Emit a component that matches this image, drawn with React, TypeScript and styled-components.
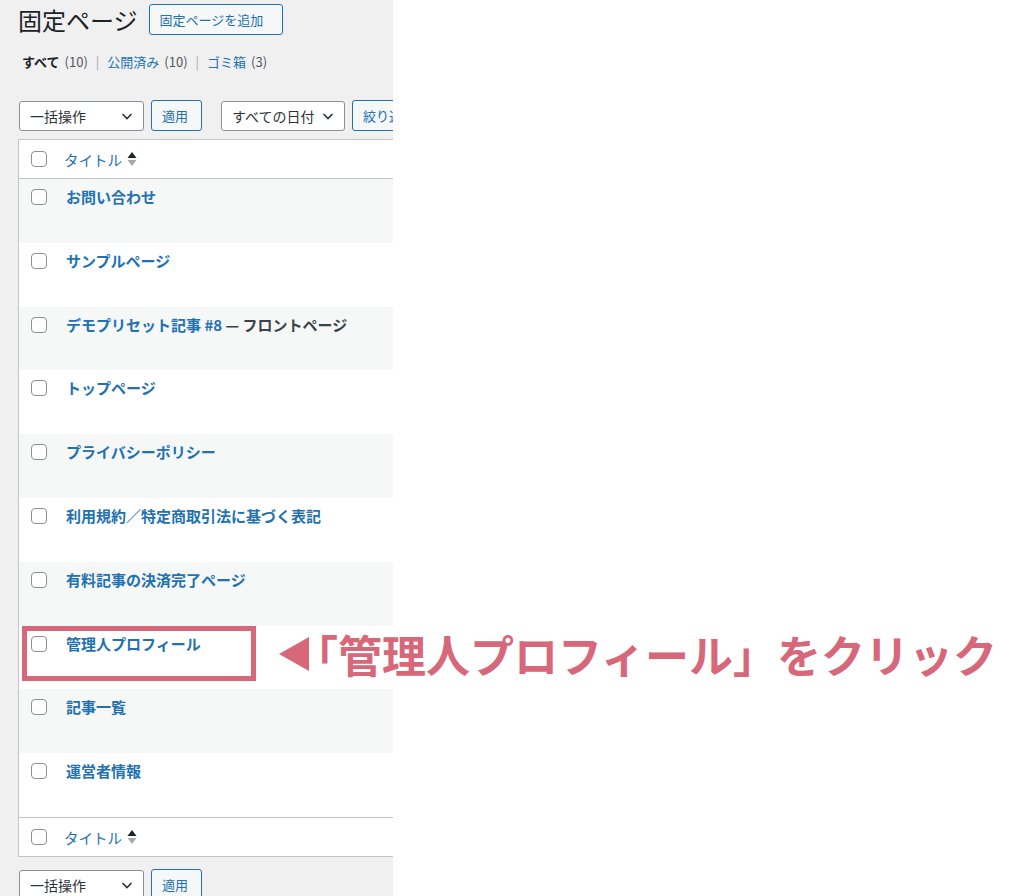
import React from "react";
import styled, { createGlobalStyle } from "styled-components";

const GlobalStyle = createGlobalStyle`
  body {
    margin: 0;
    background: #ffffff;
    font-family: "Noto Sans CJK JP", "Noto Sans", "Liberation Sans", sans-serif;
    color: #3c434a;
  }
`;

const Page = styled.div`
  position: relative;
  display: flex;
  width: 1024px;
  height: 896px;
  overflow: hidden;
`;

// 管理画面の左側（グレー部分）
const Admin = styled.div`
  width: 375px;
  height: 896px;
  padding: 4px 0 0 18px;
  background: #f0f0f1;
  overflow: hidden;
  display: flex;
  flex-direction: column;
`;

const HeadRow = styled.div`
  display: flex;
  align-items: center;
  gap: 11px;
  height: 31px;
`;

const Heading = styled.h1`
  margin: 0;
  font-size: 24px;
  font-weight: 400;
  line-height: 31px;
  color: #1d2327;
  white-space: nowrap;
`;

const OutlineButton = styled.button<{ $width?: number }>`
  flex: none;
  height: 31px;
  ${(p) => (p.$width ? `width: ${p.$width}px;` : "")}
  padding: 0 10px;
  border: 1px solid #2271b1;
  border-radius: 3px;
  background: #f6f7f7;
  color: #2271b1;
  font-family: inherit;
  font-size: 13px;
  white-space: nowrap;
  overflow: hidden;
  text-align: left;
`;

const Filters = styled.div`
  display: flex;
  align-items: center;
  margin-top: 17px;
  padding-left: 4px;
  height: 20px;
  font-size: 13px;
  white-space: nowrap;
`;

const FilterItem = styled.span<{ $current?: boolean }>`
  color: ${(p) => (p.$current ? "#1d2327" : "#2271b1")};
  font-weight: ${(p) => (p.$current ? 700 : 400)};
`;

const Count = styled.span`
  color: #50575e;
  margin-left: 5px;
`;

const Sep = styled.span`
  color: #a7aaad;
  margin: 0 8px;
`;

const Toolbar = styled.div<{ $top: number }>`
  display: flex;
  align-items: center;
  gap: 7px;
  margin-top: ${(p) => p.$top}px;
  padding-left: 1px;
  flex: none;
`;

const Select = styled.div<{ $width: number; $gapLeft?: number }>`
  flex: none;
  box-sizing: border-box;
  width: ${(p) => p.$width}px;
  height: 30px;
  display: flex;
  align-items: center;
  justify-content: space-between;
  padding: 0 8px 0 10px;
  margin-left: ${(p) => p.$gapLeft ?? 0}px;
  border: 1px solid #8c8f94;
  border-radius: 3px;
  background: #ffffff;
  color: #2c3338;
  font-size: 14px;
  white-space: nowrap;
`;

const Table = styled.div`
  flex: none;
  width: 1000px;
  margin-top: 8px;
  border: 1px solid #c3c4c7;
  background: #ffffff;
`;

const HeadCell = styled.div<{ $bottom?: boolean }>`
  display: flex;
  align-items: center;
  height: 38px;
  padding-left: 12px;
  ${(p) =>
    p.$bottom ? "border-top: 1px solid #c3c4c7;" : "border-bottom: 1px solid #c3c4c7;"}
`;

const HeadLabel = styled.span`
  margin-left: 17px;
  color: #2271b1;
  font-size: 14.5px;
  display: flex;
  align-items: center;
  gap: 5px;
`;

const Row = styled.div<{ $alt: boolean }>`
  display: flex;
  align-items: flex-start;
  box-sizing: border-box;
  height: 63.8px;
  padding: 10px 0 0 12px;
  background: ${(p) => (p.$alt ? "#f6f7f7" : "#ffffff")};
`;

const Check = styled.span`
  flex: none;
  box-sizing: border-box;
  width: 16px;
  height: 16px;
  border: 1px solid #8c8f94;
  border-radius: 4px;
  background: #ffffff;
`;

const RowTitle = styled.span`
  margin: -2px 0 0 19px;
  font-size: 15px;
  font-weight: 700;
  line-height: 20px;
  color: #2271b1;
  white-space: nowrap;
`;

const PostState = styled.span`
  color: #3c434a;
`;

// 注釈（赤枠・矢印・説明文）
const Highlight = styled.div`
  position: absolute;
  left: 22px;
  top: 626px;
  width: 234px;
  height: 55px;
  box-sizing: border-box;
  border: 5px solid #d6687a;
`;

const Callout = styled.div`
  position: absolute;
  left: 277px;
  top: 624px;
  display: flex;
  align-items: center;
  color: #d6687a;
  font-size: 44px;
  font-weight: 700;
  line-height: 60px;
  white-space: nowrap;
`;

const CalloutText = styled.span`
  margin-left: -17px;
`;

const Chevron = () => (
  <svg width="16" height="16" viewBox="0 0 16 16" fill="none">
    <path d="M3.5 6l4.5 4.5L12.5 6" stroke="#2c3338" strokeWidth="1.6" />
  </svg>
);

const SortIcon = () => (
  <svg width="10" height="16" viewBox="0 0 10 16">
    <polygon points="5,1 9.5,7 0.5,7" fill="#1d2327" />
    <polygon points="0.5,9 9.5,9 5,15" fill="#a7aaad" />
  </svg>
);

const pages = [
  "お問い合わせ",
  "サンプルページ",
  "デモプリセット記事 #8",
  "トップページ",
  "プライバシーポリシー",
  "利用規約／特定商取引法に基づく表記",
  "有料記事の決済完了ページ",
  "管理人プロフィール",
  "記事一覧",
  "運営者情報",
];

export default function App() {
  return (
    <>
      <GlobalStyle />
      <Page>
        <Admin>
          <HeadRow>
            <Heading>固定ページ</Heading>
            <OutlineButton $width={134}>固定ページを追加</OutlineButton>
          </HeadRow>

          <Filters>
            <FilterItem $current>すべて</FilterItem>
            <Count>(10)</Count>
            <Sep>|</Sep>
            <FilterItem>公開済み</FilterItem>
            <Count>(10)</Count>
            <Sep>|</Sep>
            <FilterItem>ゴミ箱</FilterItem>
            <Count>(3)</Count>
          </Filters>

          <Toolbar $top={29}>
            <Select $width={125}>
              一括操作
              <Chevron />
            </Select>
            <OutlineButton $width={51}>適用</OutlineButton>
            <Select $width={124} $gapLeft={12}>
              すべての日付
              <Chevron />
            </Select>
            <OutlineButton>絞り込み</OutlineButton>
          </Toolbar>

          <Table>
            <HeadCell>
              <Check />
              <HeadLabel>
                タイトル
                <SortIcon />
              </HeadLabel>
            </HeadCell>
            {pages.map((title, i) => (
              <Row key={title} $alt={i % 2 === 0}>
                <Check />
                <RowTitle>
                  {title}
                  {i === 2 && <PostState> — フロントページ</PostState>}
                </RowTitle>
              </Row>
            ))}
            <HeadCell $bottom>
              <Check />
              <HeadLabel>
                タイトル
                <SortIcon />
              </HeadLabel>
            </HeadCell>
          </Table>

          <Toolbar $top={12}>
            <Select $width={125}>
              一括操作
              <Chevron />
            </Select>
            <OutlineButton $width={51}>適用</OutlineButton>
          </Toolbar>
        </Admin>

        <Highlight />
        <Callout>
          <svg width="34" height="36" viewBox="0 0 34 36">
            <polygon points="32,1 32,35 2,18" fill="#d6687a" />
          </svg>
          <CalloutText>「管理人プロフィール」をクリック</CalloutText>
        </Callout>
      </Page>
    </>
  );
}
